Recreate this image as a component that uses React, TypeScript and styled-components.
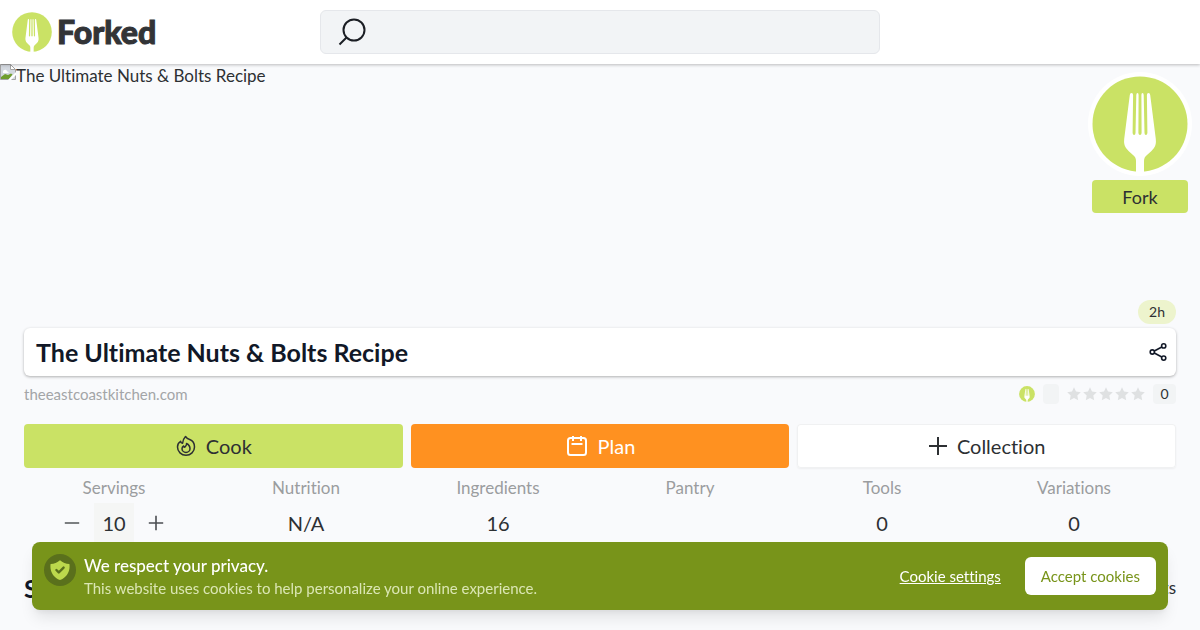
import React from "react";
import styled, { createGlobalStyle } from "styled-components";

const Global = createGlobalStyle`
  *, *::before, *::after { box-sizing: border-box; }
  html { overflow: hidden; }
  body { margin: 0; background: #f9fafc; color: #2d3033; font-family: Lato, "Liberation Sans", sans-serif; font-size: 17px; line-height: 24px; font-variant-ligatures: none; }
  h1, h2, p, dl, dd, dt { margin: 0; }
  button, input { font: inherit; color: inherit; }
  button { cursor: pointer; border: 0; padding: 0; background: none; }
  svg { display: block; flex: none; }
`;

const Header = styled.header`
  position: relative;
  z-index: 2;
  display: grid;
  grid-template-columns: 1fr minmax(0, 560px) 1fr;
  align-items: center;
  height: 64px;
  padding: 0 12px;
  background: #fff;
  box-shadow: 0 1px 3px rgba(0, 0, 0, 0.25);
`;

const Brand = styled.a`
  display: flex;
  align-items: center;
  gap: 5px;
  color: #323437;
  font-size: 32px;
  font-weight: 900;
  line-height: 40px;
  text-decoration: none;
  -webkit-text-stroke: 1px currentColor;
`;

const Search = styled.label`
  display: flex;
  align-items: center;
  gap: 12px;
  height: 44px;
  padding: 0 16px;
  border: 1px solid #e5e7eb;
  border-radius: 6px;
  background: #f2f4f6;
  color: #1b1e24;
`;

const SearchInput = styled.input`
  flex: 1;
  min-width: 0;
  border: 0;
  outline: 0;
  background: transparent;
`;

const Hero = styled.section`
  display: flex;
  justify-content: space-between;
  align-items: flex-start;
  min-height: 236px;
`;

const Photo = styled.div`
  display: flex;
`;

const ForkColumn = styled.div`
  display: flex;
  flex-direction: column;
  align-items: center;
  gap: 4px;
  padding: 8px 8px 0;
`;

const ForkBadge = styled.div`
  padding: 4px;
  border-radius: 50%;
  background: #fff;
`;

const ForkButton = styled.button`
  width: 96px;
  height: 33px;
  border-radius: 4px;
  background: #cae265;
  font-size: 18px;
`;

const Content = styled.main`
  display: flex;
  flex-direction: column;
  padding: 0 24px;
`;

const TimePill = styled.span`
  align-self: flex-end;
  padding: 0 11px;
  border-radius: 12px;
  background: #edf4cd;
  font-size: 14px;
`;

const TitleCard = styled.div`
  display: flex;
  align-items: center;
  justify-content: space-between;
  height: 48px;
  margin-top: 4px;
  padding: 0 8px 0 12px;
  border-radius: 6px;
  background: #fff;
  color: #111827;
  box-shadow: 0 1px 3px rgba(0, 0, 0, 0.3);
`;

const Title = styled.h1`
  font-size: 25px;
  line-height: 32px;
  font-weight: 700;
`;

const MetaRow = styled.div`
  display: flex;
  align-items: center;
  justify-content: space-between;
  height: 20px;
  margin-top: 8px;
`;

const Source = styled.a`
  color: #a3a5a7;
  font-size: 15px;
  line-height: 20px;
  text-decoration: none;
`;

const Rating = styled.div`
  display: flex;
  align-items: center;
  gap: 8px;
`;

const Chip = styled.span<{ $width: number }>`
  width: ${(p) => p.$width}px;
  height: 20px;
  border-radius: 4px;
  background: #f2f4f5;
  font-size: 14px;
  line-height: 20px;
  text-align: center;
`;

const Stars = styled.div`
  display: flex;
  gap: 2px;
`;

const Actions = styled.div`
  display: grid;
  grid-template-columns: repeat(3, 1fr);
  gap: 8px;
  margin-top: 20px;
`;

const tones = {
  green: "background: #cae265;",
  orange: "background: #ff9120; color: #fff;",
  plain: "background: #fff; box-shadow: inset 0 0 0 1px #f0f1f2, 0 1px 2px rgba(0, 0, 0, 0.05);",
};

const Action = styled.button<{ $tone: keyof typeof tones }>`
  display: flex;
  align-items: center;
  justify-content: center;
  gap: 9px;
  height: 44px;
  border-radius: 4px;
  font-size: 20px;
  ${(p) => tones[p.$tone]}
`;

const Stats = styled.dl`
  display: grid;
  grid-template-columns: repeat(6, 1fr);
  margin-top: 8px;
`;

const Stat = styled.div`
  padding-right: 12px;
  text-align: center;
`;

const StatLabel = styled.dt`
  color: #9b9d9f;
`;

const StatValue = styled.dd`
  display: flex;
  align-items: center;
  justify-content: center;
  gap: 14px;
  height: 40px;
  margin-top: 3px;
  font-size: 20px;
`;

const Quantity = styled.input`
  width: 40px;
  height: 40px;
  padding: 0;
  border: 0;
  background: #f5f6f5;
  text-align: center;
`;

const StepButton = styled.button`
  color: #4b4e52;
`;

const SectionHead = styled.div`
  display: flex;
  align-items: center;
  justify-content: space-between;
  margin-top: 29px;
`;

const SectionTitle = styled.h2`
  color: #111827;
  font-size: 25px;
  line-height: 32px;
`;

const Banner = styled.aside`
  position: fixed;
  z-index: 5;
  right: 32px;
  bottom: 20px;
  left: 32px;
  display: flex;
  align-items: center;
  gap: 8px;
  padding: 12px;
  border-radius: 8px;
  background: #78941a;
  color: #fff;
  box-shadow: 0 10px 15px -3px rgba(0, 0, 0, 0.1), 0 4px 6px -2px rgba(0, 0, 0, 0.05);
`;

const ShieldBadge = styled.div`
  align-self: flex-start;
  padding: 4px;
  border-radius: 50%;
  background: #5a701c;
  color: #bcd84c;
`;

const BannerText = styled.div`
  flex: 1;
`;

const BannerTitle = styled.p`
  font-weight: 500;
`;

const BannerNote = styled.p`
  color: #dbe6b4;
  font-size: 15px;
  line-height: 20px;
`;

const BannerActions = styled.div`
  display: flex;
  align-items: center;
  gap: 24px;
  font-size: 15px;
`;

const SettingsLink = styled.a`
  color: #fff;
`;

const Accept = styled.button`
  height: 38px;
  padding: 0 16px;
  border-radius: 6px;
  background: #fff;
  color: #78941a;
`;

const ForkLogo = ({ size }: { size: number }) => (
  <svg width={size} height={size} viewBox="0 0 96 96" aria-hidden="true">
    <circle cx="48" cy="48" r="47.5" fill="#cae265" />
    <path
      fill="#fff"
      d="M39.500 17q1.600 0 1.600 2L40.600 57q.2 2 1.500 2t1.400-2L44.300 19q.1-2 1.200-2t1.100 2L46.400 57q.2 2 1.600 2t1.600-2L49.400 19q0-2 1.100-2t1.200 2L52.500 57q.1 2 1.400 2t1.500-2L54.900 19q0-2 1.600-2t1.700 2L63.800 63q.6 6-1.800 9-2 3-7 7-3 2-3 6v11H44V85q0-4-3-6-5-4-7-7-2.400-3-1.800-9L37.800 19q.1-2 1.700-2z"
    />
  </svg>
);

const SearchIcon = () => (
  <svg width="32" height="32" viewBox="0 0 32 32" fill="none" stroke="currentColor" strokeWidth="2" aria-hidden="true">
    <circle cx="17" cy="14" r="10.500" />
    <path d="M9.500 21.500 2.500 28.500" />
  </svg>
);

const BrokenImage = () => (
  <svg width="16" height="16" viewBox="0 0 16 16" aria-hidden="true">
    <path d="M.5.5h10l5 5v10H.5z" fill="#d3d8df" stroke="#a4a4a4" />
    <path d="M10.500.5v5h5z" fill="#fff" stroke="#a4a4a4" />
    <path d="M3 8c0-3 4-3 4-.5C9 7 9 9 8 9H3z" fill="#fff" />
    <path d="M1 15v-2l4-3 3 1 3-1.500 1.500 1L9 15z" fill="#6f9e2d" />
    <path d="M8 16l8-8v3l-5 5z" fill="#fff" />
  </svg>
);

const ShareIcon = () => (
  <svg width="20" height="20" viewBox="0 0 20 20" fill="none" stroke="currentColor" strokeWidth="1.600" aria-hidden="true">
    <circle cx="4.300" cy="10" r="2.100" />
    <circle cx="15.700" cy="3.900" r="2.100" />
    <circle cx="15.700" cy="16.100" r="2.100" />
    <path d="m6.300 9 7.500-4M6.300 11l7.500 4" />
  </svg>
);

const Star = () => (
  <svg width="14" height="14" viewBox="0 0 14 14" aria-hidden="true">
    <path fill="#dfe1e2" d="m7 .3 2 4.300 4.800.6-3.500 3.200.9 4.800L7 10.900l-4.200 2.300.9-4.800L.2 5.200 5 4.600z" />
  </svg>
);

const FlameIcon = () => (
  <svg width="22" height="22" viewBox="0 0 22 22" fill="none" stroke="currentColor" strokeWidth="1.500" strokeLinejoin="round" aria-hidden="true">
    <path d="M10.500 1.500C8.500 3.500 7.800 6 7.600 8.300 6.500 8 5.800 7.200 5.600 6.300 3.500 7.500 2.500 9.500 2.500 12a8.500 8.300 0 0 0 17 0c0-4-2-6.500-4.800-7.500C13 4 11.500 3 10.500 1.500z" />
    <path d="M11.500 8.500c.5 2-1 2.500-1.700 3.700-.8-.2-1.100-.7-1.200-1.200C7.500 11.700 7 12.700 7 13.700a4 3.700 0 0 0 8 0c0-2.500-1.500-4.200-3.500-5.200z" />
  </svg>
);

const CalendarIcon = () => (
  <svg width="24" height="24" viewBox="0 0 24 24" fill="none" stroke="currentColor" strokeWidth="2" aria-hidden="true">
    <rect x="3" y="4" width="18" height="17" rx="2.500" />
    <path d="M8 2v5M16 2v5M6.500 10h11" />
  </svg>
);

const PlusIcon = ({ size, weight }: { size: number; weight: number }) => (
  <svg width={size} height={size} viewBox="0 0 20 20" stroke="currentColor" strokeWidth={weight} aria-hidden="true">
    <path d="M10 1v18M1 10h18" />
  </svg>
);

const MinusIcon = () => (
  <svg width="16" height="16" viewBox="0 0 20 20" stroke="currentColor" strokeWidth="1.800" aria-hidden="true">
    <path d="M1 10h18" />
  </svg>
);

const ShieldIcon = () => (
  <svg width="24" height="24" viewBox="0 0 20 20" fill="currentColor" aria-hidden="true">
    <path
      fillRule="evenodd"
      d="M2.166 4.999A11.954 11.954 0 0 0 10 1.944 11.954 11.954 0 0 0 17.834 5c.11.650.166 1.320.166 2.001 0 5.225-3.340 9.670-8 11.317C5.340 16.670 2 12.225 2 7c0-.682.057-1.350.166-2.001zm11.541 3.708a1 1 0 0 0-1.414-1.414L9 10.586 7.707 9.293a1 1 0 0 0-1.414 1.414l2 2a1 1 0 0 0 1.414 0l4-4z"
    />
  </svg>
);

const stats = [
  { label: "Nutrition", value: "N/A" },
  { label: "Ingredients", value: "16" },
  { label: "Pantry", value: "" },
  { label: "Tools", value: "0" },
  { label: "Variations", value: "0" },
];

export default function App() {
  return (
    <>
      <Global />
      <Header>
        <Brand href="#">
          <ForkLogo size={40} />
          Forked
        </Brand>
        <Search>
          <SearchIcon />
          <SearchInput type="search" aria-label="Search recipes" />
        </Search>
      </Header>
      <Hero>
        <Photo>
          <BrokenImage />
          <span>The Ultimate Nuts &amp; Bolts Recipe</span>
        </Photo>
        <ForkColumn>
          <ForkBadge>
            <ForkLogo size={96} />
          </ForkBadge>
          <ForkButton type="button">Fork</ForkButton>
        </ForkColumn>
      </Hero>
      <Content>
        <TimePill>2h</TimePill>
        <TitleCard>
          <Title>The Ultimate Nuts &amp; Bolts Recipe</Title>
          <button type="button" aria-label="Share">
            <ShareIcon />
          </button>
        </TitleCard>
        <MetaRow>
          <Source href="#">theeastcoastkitchen.com</Source>
          <Rating>
            <ForkLogo size={16} />
            <Chip $width={16} />
            <Stars>
              {[1, 2, 3, 4, 5].map((n) => (
                <Star key={n} />
              ))}
            </Stars>
            <Chip $width={23}>0</Chip>
          </Rating>
        </MetaRow>
        <Actions>
          <Action type="button" $tone="green">
            <FlameIcon />
            Cook
          </Action>
          <Action type="button" $tone="orange">
            <CalendarIcon />
            Plan
          </Action>
          <Action type="button" $tone="plain">
            <PlusIcon size={20} weight={2} />
            Collection
          </Action>
        </Actions>
        <Stats>
          <Stat>
            <StatLabel>Servings</StatLabel>
            <StatValue>
              <StepButton type="button" aria-label="Fewer servings">
                <MinusIcon />
              </StepButton>
              <Quantity type="text" aria-label="Servings" defaultValue="10" />
              <StepButton type="button" aria-label="More servings">
                <PlusIcon size={16} weight={2} />
              </StepButton>
            </StatValue>
          </Stat>
          {stats.map((s) => (
            <Stat key={s.label}>
              <StatLabel>{s.label}</StatLabel>
              <StatValue>{s.value}</StatValue>
            </Stat>
          ))}
        </Stats>
        <SectionHead>
          <SectionTitle>Steps</SectionTitle>
          <span>Units</span>
        </SectionHead>
      </Content>
      <Banner>
        <ShieldBadge>
          <ShieldIcon />
        </ShieldBadge>
        <BannerText>
          <BannerTitle>We respect your privacy.</BannerTitle>
          <BannerNote>This website uses cookies to help personalize your online experience.</BannerNote>
        </BannerText>
        <BannerActions>
          <SettingsLink href="#">Cookie settings</SettingsLink>
          <Accept type="button">Accept cookies</Accept>
        </BannerActions>
      </Banner>
    </>
  );
}
